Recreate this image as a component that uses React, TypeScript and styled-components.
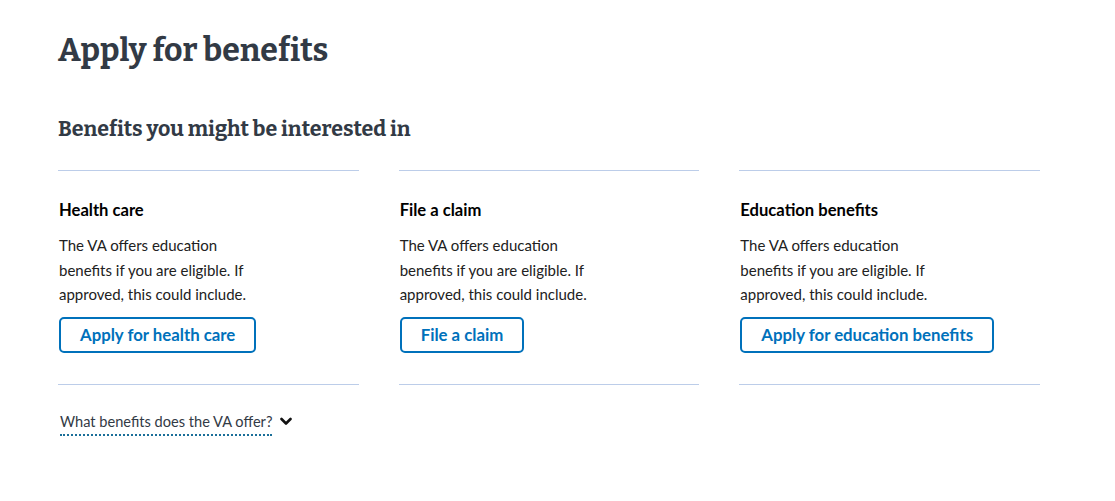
import React from "react";
import styled, { createGlobalStyle } from "styled-components";

const Global = createGlobalStyle`
  html, body { margin: 0; padding: 0; background: #ffffff; }
  body { font-family: "Source Sans Pro", Lato, "Open Sans", sans-serif; color: #323a45; }
`;

const Page = styled.main`
  width: 982px;
  padding: 28px 0 0 58px;
`;

const Title = styled.h1`
  margin: 0;
  font-family: Bitter, "DejaVu Serif", serif;
  font-weight: 700;
  font-size: 32px;
  line-height: 44px;
  color: #323a45;
`;

const Subtitle = styled.h2`
  margin: 44px 0 0;
  font-family: Bitter, "DejaVu Serif", serif;
  font-weight: 700;
  font-size: 21.4px;
  line-height: 26px;
  color: #323a45;
`;

const Cards = styled.div`
  display: grid;
  grid-template-columns: repeat(3, 1fr);
  column-gap: 40px;
  margin-top: 28px;
`;

const Card = styled.section`
  border-top: 1px solid #bccde9;
  border-bottom: 1px solid #bccde9;
  padding: 27px 0 31px 1px;
  display: flex;
  flex-direction: column;
  align-items: flex-start;
`;

const CardTitle = styled.h3`
  margin: 0;
  font-size: 16.6px;
  line-height: 24px;
  font-weight: 700;
  color: #000000;
`;

const CardText = styled.p`
  margin: 11px 0 10px;
  font-size: 15px;
  line-height: 24.5px;
  color: #212121;
  max-width: 200px;
`;

const Button = styled.a`
  display: inline-flex;
  align-items: center;
  height: 36px;
  box-sizing: border-box;
  padding: 0 19px;
  border: 2px solid #0071bb;
  border-radius: 5px;
  color: #0071bb;
  font-weight: 700;
  font-size: 16.8px;
  text-decoration: none;
  cursor: pointer;
`;

const Disclosure = styled.button`
  display: inline-flex;
  align-items: center;
  gap: 8px;
  margin-top: 27px;
  margin-left: 2px;
  padding: 0;
  border: 0;
  background: none;
  font-family: inherit;
  cursor: pointer;
`;

const DisclosureLabel = styled.span`
  font-size: 14.6px;
  line-height: 20px;
  color: #323a45;
  padding-bottom: 2px;
  border-bottom: 2px dotted #1a6f99;
`;

const Chevron = () => (
  <svg width="12" height="9" viewBox="0 0 12 9" aria-hidden="true" style={{ marginTop: -4 }}>
    <path d="M1.5 2 L6 6.5 L10.5 2" fill="none" stroke="#111" strokeWidth="2.6" strokeLinecap="round" strokeLinejoin="round" />
  </svg>
);

const cards = [
  { title: "Health care", action: "Apply for health care" },
  { title: "File a claim", action: "File a claim" },
  { title: "Education benefits", action: "Apply for education benefits" },
];

export default function App() {
  return (
    <>
      <Global />
      <Page>
        <Title>Apply for benefits</Title>
        <Subtitle>Benefits you might be interested in</Subtitle>
        <Cards>
          {cards.map((c) => (
            <Card key={c.title}>
              <CardTitle>{c.title}</CardTitle>
              <CardText>
                The VA offers education benefits if you are eligible. If approved, this could include.
              </CardText>
              <Button>{c.action}</Button>
            </Card>
          ))}
        </Cards>
        <Disclosure>
          <DisclosureLabel>What benefits does the VA offer?</DisclosureLabel>
          <Chevron />
        </Disclosure>
      </Page>
    </>
  );
}
